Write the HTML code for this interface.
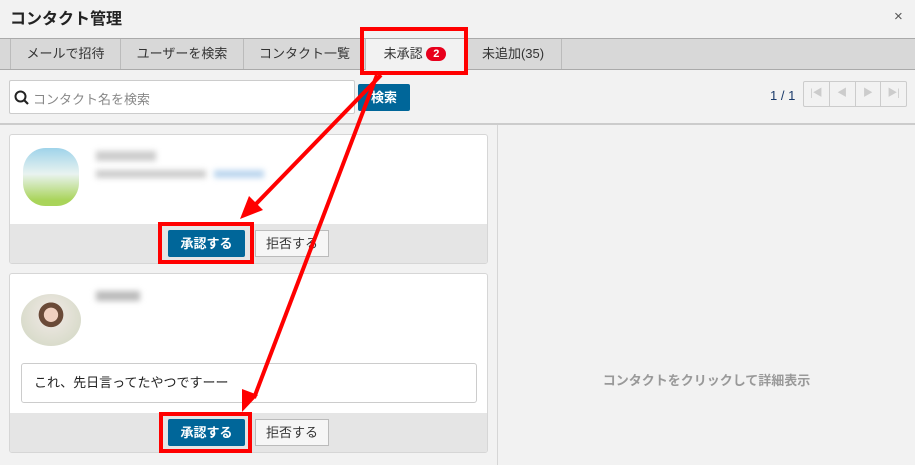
<!DOCTYPE html>
<html><head><meta charset="utf-8"><style>
*{box-sizing:border-box;margin:0;padding:0}
body{width:915px;height:465px;overflow:hidden;background:#f2f2f2;font-family:"Liberation Sans","Noto Sans CJK JP",sans-serif;position:relative;color:#333}
.a{position:absolute}
.tab{position:absolute;top:39px;height:30px;border-left:1px solid #bbb;font-size:13px;line-height:29px;text-align:center;color:#333}
.btnb{position:absolute;background:#006699;color:#fff;font-weight:bold;font-size:13px;text-align:center;border-radius:2px}
.btnw{position:absolute;background:#f6f6f6;border:1px solid #bbb;font-size:13px;text-align:center;color:#333}
.card{position:absolute;left:9px;width:479px;background:#fff;border:1px solid #d6d6d6;border-radius:3px;overflow:hidden}
.foot{position:absolute;left:0;right:0;bottom:0;background:#e5e5e5}
</style></head><body>
<div class="a" style="left:10px;top:5px;font-size:16px;font-weight:bold;color:#222">コンタクト管理</div>
<div class="a" style="left:894px;top:8px;font-size:15px;color:#555">×</div>
<div class="a" style="left:0;top:38px;width:915px;height:32px;background:#d8d8d8;border-top:1px solid #aaa;border-bottom:1px solid #aaa"></div>
<div class="tab" style="left:10px;width:110px">メールで招待</div>
<div class="tab" style="left:120px;width:123px">ユーザーを検索</div>
<div class="tab" style="left:243px;width:122px">コンタクト一覧</div>
<div class="tab" style="left:365px;width:99px;background:#f2f2f2;height:31px">未承認 <span style="display:inline-block;background:#e8001c;color:#fff;font-weight:bold;font-size:11px;line-height:14px;border-radius:8px;padding:0 7px;vertical-align:1px">2</span></div>
<div class="tab" style="left:464px;width:98px;border-right:1px solid #bbb">未追加(35)</div>
<div class="a" style="left:9px;top:80px;width:346px;height:34px;background:#fff;border:1px solid #ccc;border-radius:2px"></div>
<svg class="a" style="left:14px;top:90px" width="16" height="16" viewBox="0 0 16 16"><circle cx="6.5" cy="6.5" r="5" fill="none" stroke="#222" stroke-width="2"/><path d="M10 10L14 14" stroke="#222" stroke-width="2.2"/></svg>
<div class="a" style="left:33px;top:89px;font-size:13px;color:#888">コンタクト名を検索</div>
<div class="btnb" style="left:358px;top:84px;width:52px;height:27px;line-height:27px">検索</div>
<div class="a" style="left:770px;top:88px;font-size:13px;color:#1a3a6a">1 / 1</div>
<div class="a" style="left:803px;top:81px;width:104px;height:26px;border:1px solid #ccc;border-radius:2px;display:flex;font-size:10px;color:#ccc">
<div style="flex:1;border-right:1px solid #ccc;text-align:center;line-height:24px">|◀</div><div style="flex:1;border-right:1px solid #ccc;text-align:center;line-height:24px">◀</div><div style="flex:1;border-right:1px solid #ccc;text-align:center;line-height:24px">▶</div><div style="flex:1;text-align:center;line-height:24px">▶|</div></div>
<div class="a" style="left:0;top:123px;width:915px;height:2px;background:#ccc"></div>
<div class="a" style="left:497px;top:125px;width:1px;height:340px;background:#d6d6d6"></div>
<div class="a" style="left:498px;top:370px;width:417px;text-align:center;font-size:13px;font-weight:bold;color:#999">コンタクトをクリックして詳細表示</div>

<div class="card" style="top:134px;height:130px">
<div class="a" style="left:13px;top:13px;width:56px;height:58px;border-radius:40%;background:linear-gradient(#9fd3ea,#e9f3f0 45%,#a9d45a 90%)"></div>
<div class="a" style="left:86px;top:16px;width:60px;height:10px;background:#ccc;filter:blur(3px)"></div>
<div class="a" style="left:86px;top:35px;width:110px;height:8px;background:#ccc;filter:blur(3px)"></div>
<div class="a" style="left:204px;top:35px;width:50px;height:8px;background:#bcd6ee;filter:blur(3px)"></div>
<div class="foot" style="height:39px"></div>
<div class="btnb" style="left:158px;top:95px;width:77px;height:27px;line-height:27px">承認する</div>
<div class="btnw" style="left:245px;top:95px;width:74px;height:27px;line-height:25px">拒否する</div>
</div>

<div class="card" style="top:273px;height:180px">
<div class="a" style="left:11px;top:20px;width:60px;height:52px;border-radius:50%;background:radial-gradient(circle at 50% 40%,#f0d0c0 0 16%,#6a4a38 17% 28%,#e8e4dc 29%,#cfd6c0)"></div>
<div class="a" style="left:86px;top:17px;width:44px;height:10px;background:#bbb;filter:blur(3px)"></div>
<div class="a" style="left:11px;top:89px;width:456px;height:40px;border:1px solid #ccc;border-radius:3px;font-size:13px;line-height:38px;padding-left:12px;color:#222">これ、先日言ってたやつですーー</div>
<div class="foot" style="height:39px"></div>
<div class="btnb" style="left:158px;top:145px;width:77px;height:27px;line-height:27px">承認する</div>
<div class="btnw" style="left:245px;top:145px;width:74px;height:27px;line-height:25px">拒否する</div>
</div>

<svg class="a" style="left:0;top:0" width="915" height="465">
<g fill="none" stroke="#f00" stroke-width="4">
<rect x="362" y="29" width="104" height="44"/>
<rect x="160" y="224" width="92" height="38"/>
<rect x="161" y="414" width="89" height="37"/>
<path d="M381 75L255 205"/>
<path d="M377 75L254 398"/>
</g>
<g fill="#f00">
<path d="M240 219L249 196L263 210Z"/>
<path d="M242 412L242 389L258 395Z"/>
</g>
</svg>
</body></html>
